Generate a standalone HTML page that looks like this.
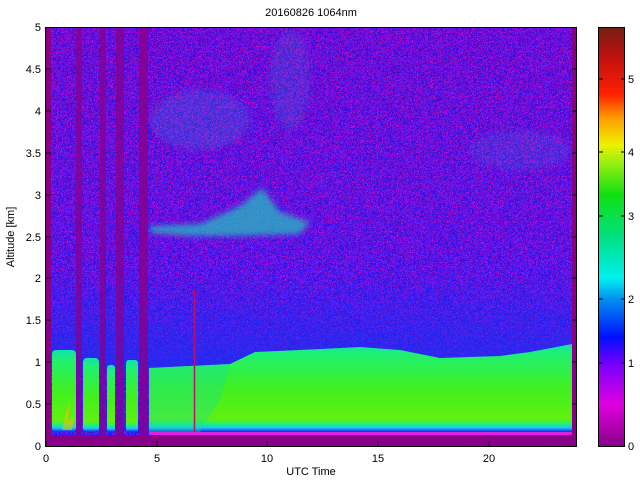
<!DOCTYPE html>
<html><head><style>
html,body{margin:0;padding:0;background:#fff;width:640px;height:480px;overflow:hidden}
svg{display:block}
text{font-family:"Liberation Sans",sans-serif;font-size:11px;fill:#000}
</style></head><body>
<svg width="640" height="480" viewBox="0 0 640 480">
<defs>
<linearGradient id="sky" x1="0" y1="0" x2="0" y2="1">
<stop offset="0" stop-color="#8a20b8"/>
<stop offset="0.45" stop-color="#7a28c8"/>
<stop offset="0.7" stop-color="#5a30e0"/>
<stop offset="1" stop-color="#2a40f0"/>
</linearGradient>
<linearGradient id="blu" x1="0" y1="0" x2="0" y2="1">
<stop offset="0" stop-color="#1a30f0" stop-opacity="0"/>
<stop offset="1" stop-color="#1a30f0" stop-opacity="0.75"/>
</linearGradient>
<linearGradient id="bl" x1="0" y1="0" x2="0" y2="1">
<stop offset="0" stop-color="#10e0b0"/>
<stop offset="0.12" stop-color="#20f070"/>
<stop offset="0.5" stop-color="#40f020"/>
<stop offset="0.85" stop-color="#60f010"/>
<stop offset="0.9" stop-color="#30f060"/>
<stop offset="0.95" stop-color="#10d0f0"/>
<stop offset="1" stop-color="#2020f0"/>
</linearGradient>
<linearGradient id="cb" x1="0" y1="1" x2="0" y2="0">
<stop offset="0" stop-color="#880088"/>
<stop offset="0.1" stop-color="#e000e0"/>
<stop offset="0.2" stop-color="#7000ff"/>
<stop offset="0.26" stop-color="#0010ff"/>
<stop offset="0.35" stop-color="#0090f0"/>
<stop offset="0.4" stop-color="#00f0f0"/>
<stop offset="0.5" stop-color="#00e080"/>
<stop offset="0.6" stop-color="#10e010"/>
<stop offset="0.68" stop-color="#a0f010"/>
<stop offset="0.72" stop-color="#f0f000"/>
<stop offset="0.78" stop-color="#ffa000"/>
<stop offset="0.84" stop-color="#ff2000"/>
<stop offset="0.93" stop-color="#c01010"/>
<stop offset="1" stop-color="#702010"/>
</linearGradient>
<filter id="nz" x="0" y="0" width="100%" height="100%" filterUnits="objectBoundingBox">
<feTurbulence type="turbulence" baseFrequency="0.8" numOctaves="1" seed="5" result="t"/>
<feColorMatrix in="t" type="matrix" values="4 0 0 0 -0.6  0 0 0 0 0  0 -3 0 0 1.6  0 0 0 0 0.55"/>
</filter>
<filter id="bz"><feGaussianBlur stdDeviation="3"/></filter>
</defs>
<rect x="46" y="27" width="531" height="419" fill="#880088"/>
<rect x="46" y="27" width="526" height="408" fill="url(#sky)"/>
<rect x="46" y="27" width="526" height="408" filter="url(#nz)"/>
<ellipse cx="200" cy="120" rx="50" ry="30" fill="#20a0e0" opacity="0.2" filter="url(#bz)"/>
<ellipse cx="290" cy="80" rx="20" ry="50" fill="#20b0d0" opacity="0.15" filter="url(#bz)"/>
<ellipse cx="520" cy="150" rx="50" ry="20" fill="#20a0e0" opacity="0.15" filter="url(#bz)"/>
<rect x="46" y="270" width="526" height="100" fill="url(#blu)"/>
<path d="M150 226 L200 224 L240 206 L262 188 L280 212 L310 222 L300 234 L240 236 L190 236 L150 233Z" fill="#20c8c0" opacity="0.7" filter="url(#bz)"/>
<g fill="#880088">
<rect x="46" y="27" width="5" height="408"/>
<rect x="76" y="27" width="6" height="408" opacity="0.7"/>
<rect x="100" y="27" width="6" height="408" opacity="0.7"/>
<rect x="116" y="27" width="8" height="408" opacity="0.7"/>
<rect x="139" y="27" width="9" height="408" opacity="0.8"/>
</g>
<g fill="url(#bl)">
<rect x="52" y="350" width="24" height="82" rx="4"/>
<rect x="83" y="358" width="16" height="74" rx="4"/>
<rect x="107" y="365" width="8" height="67" rx="3"/>
<rect x="126" y="360" width="12" height="72" rx="3"/>
<path d="M149 432 L149 368 L230 364 L255 352 L300 350 L360 347 L400 350 L440 358 L500 356 L530 352 L572 344 L572 432Z"/>
</g>
<path d="M149 432 L149 368 L230 364 L220 400 L200 432Z" fill="#10e0a0" opacity="0.35"/>
<rect x="149" y="432" width="423" height="3" fill="#e020e0"/>
<path d="M62 430 L66 412 L70 402 L68 420 L74 418 L72 430Z" fill="#f0c000" opacity="0.6"/>
<line x1="194.5" y1="290" x2="194.5" y2="432" stroke="#c0106a" stroke-width="1.5"/>
<rect x="45.5" y="27.5" width="531" height="419" fill="none" stroke="#000"/>
<g stroke="#000">
<line x1="46" y1="446" x2="46" y2="441"/><line x1="157" y1="446" x2="157" y2="441"/><line x1="267" y1="446" x2="267" y2="441"/><line x1="378" y1="446" x2="378" y2="441"/><line x1="489" y1="446" x2="489" y2="441"/>
<line x1="46" y1="404" x2="51" y2="404"/><line x1="46" y1="362" x2="51" y2="362"/><line x1="46" y1="320" x2="51" y2="320"/><line x1="46" y1="278" x2="51" y2="278"/><line x1="46" y1="237" x2="51" y2="237"/><line x1="46" y1="195" x2="51" y2="195"/><line x1="46" y1="153" x2="51" y2="153"/><line x1="46" y1="111" x2="51" y2="111"/><line x1="46" y1="69" x2="51" y2="69"/>
<line x1="577" y1="404" x2="572" y2="404"/><line x1="577" y1="362" x2="572" y2="362"/><line x1="577" y1="320" x2="572" y2="320"/><line x1="577" y1="278" x2="572" y2="278"/><line x1="577" y1="237" x2="572" y2="237"/><line x1="577" y1="195" x2="572" y2="195"/><line x1="577" y1="153" x2="572" y2="153"/><line x1="577" y1="111" x2="572" y2="111"/><line x1="577" y1="69" x2="572" y2="69"/>
</g>
<g text-anchor="end">
<text x="41" y="450">0</text><text x="41" y="408">0.5</text><text x="41" y="366">1</text><text x="41" y="324">1.5</text><text x="41" y="282">2</text><text x="41" y="241">2.5</text><text x="41" y="199">3</text><text x="41" y="157">3.5</text><text x="41" y="115">4</text><text x="41" y="73">4.5</text><text x="41" y="31">5</text>
</g>
<g text-anchor="middle">
<text x="46" y="462">0</text><text x="157" y="462">5</text><text x="267" y="462">10</text><text x="378" y="462">15</text><text x="489" y="462">20</text>
<text x="311" y="475">UTC Time</text>
<text x="311" y="16">20160826 1064nm</text>
</g>
<text transform="translate(14 237) rotate(-90)" text-anchor="middle">Altitude [km]</text>
<rect x="599" y="27" width="26" height="419" fill="url(#cb)"/>
<rect x="598.5" y="27.5" width="26" height="419" fill="none" stroke="#000"/>
<g stroke="#000">
<line x1="599" y1="363" x2="603" y2="363"/><line x1="599" y1="299" x2="603" y2="299"/><line x1="599" y1="216" x2="603" y2="216"/><line x1="599" y1="152" x2="603" y2="152"/><line x1="599" y1="79" x2="603" y2="79"/>
<line x1="625" y1="363" x2="621" y2="363"/><line x1="625" y1="299" x2="621" y2="299"/><line x1="625" y1="216" x2="621" y2="216"/><line x1="625" y1="152" x2="621" y2="152"/><line x1="625" y1="79" x2="621" y2="79"/>
</g>
<text x="628" y="450">0</text><text x="628" y="367">1</text><text x="628" y="303">2</text><text x="628" y="220">3</text><text x="628" y="156">4</text><text x="628" y="83">5</text>
</svg>
</body></html>
